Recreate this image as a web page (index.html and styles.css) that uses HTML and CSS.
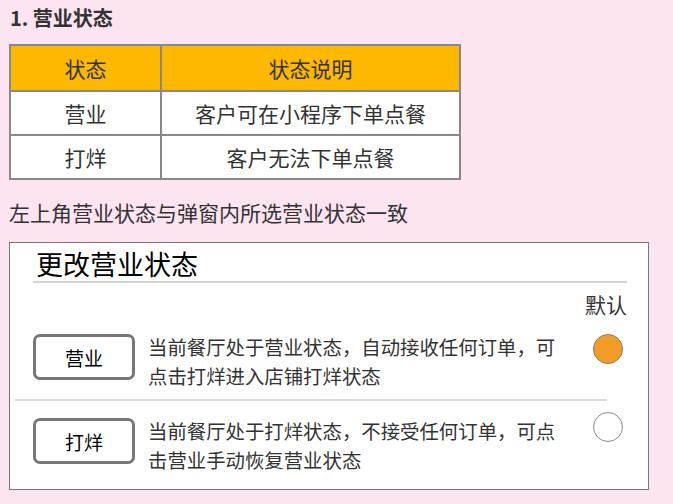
FILE: index.html
```html
<!DOCTYPE html>
<html lang="zh-CN">
<head>
<meta charset="utf-8">
<title>营业状态</title>
<link rel="stylesheet" href="styles.css">
</head>
<body>
<div class="page">
  <h1 class="heading">1. 营业状态</h1>
  <table class="status-table">
    <thead>
      <tr><th class="col-a">状态</th><th class="col-b">状态说明</th></tr>
    </thead>
    <tbody>
      <tr><td>营业</td><td>客户可在小程序下单点餐</td></tr>
      <tr><td>打烊</td><td>客户无法下单点餐</td></tr>
    </tbody>
  </table>
  <p class="note">左上角营业状态与弹窗内所选营业状态一致</p>
  <div class="dialog">
    <div class="dialog-head">更改营业状态</div>
    <div class="default-label">默认</div>
    <div class="option option-open">
      <div class="btn">营业</div>
      <div class="desc">当前餐厅处于营业状态，自动接收任何订单，可点击打烊进入店铺打烊状态</div>
      <div class="radio radio-on"></div>
    </div>
    <div class="divider"></div>
    <div class="option option-closed">
      <div class="btn">打烊</div>
      <div class="desc">当前餐厅处于打烊状态，不接受任何订单，可点击营业手动恢复营业状态</div>
      <div class="radio"></div>
    </div>
  </div>
</div>
</body>
</html>
```

FILE: styles.css
```css
html, body {
  margin: 0;
  padding: 0;
}
body {
  background: #fde4f1;
  font-family: "Noto Sans CJK SC", "Noto Sans", sans-serif;
  color: #333;
}
.page {
  padding: 4px 0 0 9px;
}
.heading {
  margin: 0 0 0 1px;
  font-size: 20px;
  line-height: 28px;
  font-weight: bold;
  color: #333;
}
.status-table {
  margin-top: 12px;
  width: 452px;
  border-collapse: collapse;
  border: 2px solid #888;
  background: #fff;
}
.status-table th,
.status-table td {
  border: 2px solid #888;
  font-size: 21px;
  font-weight: normal;
  text-align: center;
  padding: 0;
  color: #333;
  height: 42px;
  line-height: 26px;
}
.status-table th {
  background: #ffb800;
  height: 44px;
}
.col-a { width: 149px; }
.note {
  margin: 18px 0 0 0;
  font-size: 21px;
  line-height: 29px;
  color: #333;
}
.dialog {
  margin-top: 15px;
  width: 638px;
  height: 246px;
  border: 1px solid #777;
  background: #fff;
  box-sizing: content-box;
  display: flex;
  flex-direction: column;
}
.dialog-head {
  margin: 4px 21px 0 23px;
  padding-left: 3px;
  font-size: 27px;
  line-height: 34px;
  color: #000;
  border-bottom: 2px solid #d4d4d4;
}
.default-label {
  margin: 8px 21px 0 0;
  text-align: right;
  font-size: 21px;
  line-height: 26px;
  color: #333;
}
.option {
  display: flex;
  align-items: flex-start;
  padding: 0 25px 0 23px;
}
.option-open {
  margin-top: 15px;
  padding-bottom: 9px;
}
.option-closed {
  margin-top: 15px;
}
.btn {
  width: 96px;
  height: 40px;
  margin-top: 2px;
  border: 3px solid #777;
  border-radius: 7px;
  display: flex;
  align-items: center;
  justify-content: center;
  font-size: 19px;
  color: #000;
  flex: none;
}
.desc {
  width: 422px;
  margin-left: 13px;
  font-size: 19.4px;
  line-height: 29px;
  color: #333;
}
.radio {
  margin-left: auto;
  width: 28px;
  height: 28px;
  border: 1.5px solid #888;
  border-radius: 50%;
  background: #fff;
  flex: none;
}
.option-open .radio { margin-top: 2px; }
.option-closed .radio { margin-top: -4px; }
.radio-on {
  background: #f39c25;
  border-color: #8c7b68;
}
.divider {
  margin: 0 41px 0 5px;
  height: 2px;
  background: #dcdcdc;
}
```
